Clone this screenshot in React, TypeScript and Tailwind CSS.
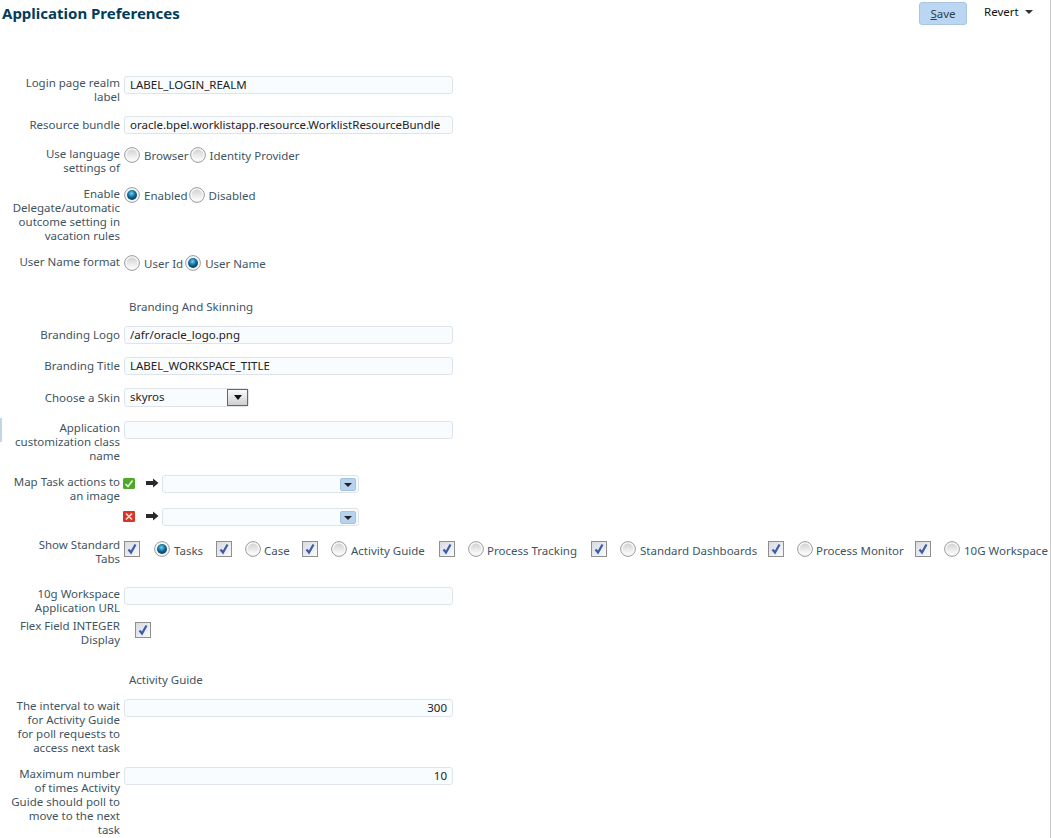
import React from 'react';

const labelCls = 'w-[120px] shrink-0 text-right text-[#41545f] leading-[14px]';
const inputCls = 'w-[329px] h-[18px] rounded-[3px] border border-[#dfe4ea] bg-[#f9fcff] px-[5px] text-[#222] leading-[16px]';

const Radio = ({ on = false }: { on?: boolean }) => (
  <svg width="16" height="16" viewBox="0 0 16 16" className="shrink-0">
    <defs>
      <linearGradient id="rb" x1="0" y1="0" x2="0" y2="1">
        <stop offset="0" stopColor="#d2d2d2" />
        <stop offset="1" stopColor="#fcfcfc" />
      </linearGradient>
      <radialGradient id="rd" cx="0.45" cy="0.35" r="0.7">
        <stop offset="0" stopColor="#7fd0f0" />
        <stop offset="0.5" stopColor="#0f6f9f" />
        <stop offset="1" stopColor="#07304f" />
      </radialGradient>
    </defs>
    <circle cx="8" cy="8" r="7.4" fill="#f7f7f7" stroke="#999da0" strokeWidth="1" />
    {on ? <circle cx="8" cy="8" r="5" fill="url(#rd)" /> : <circle cx="8" cy="8" r="5.4" fill="url(#rb)" />}
  </svg>
);

const Check = () => (
  <svg width="16" height="16" viewBox="0 0 16 16" className="shrink-0">
    <defs>
      <linearGradient id="cb" x1="0" y1="0" x2="1" y2="1">
        <stop offset="0" stopColor="#d6d9e0" />
        <stop offset="1" stopColor="#fbfbfc" />
      </linearGradient>
    </defs>
    <rect x="0.5" y="0.5" width="15" height="15" fill="url(#cb)" stroke="#8f8f8f" />
    <path d="M4.5 8.5 L7 11.5 L11.5 3.5" fill="none" stroke="#3d5ca8" strokeWidth="2.2" />
  </svg>
);

const Arrow = () => (
  <svg width="13" height="10" viewBox="0 0 13 10" className="shrink-0">
    <path d="M0 3H7V0.5L12.5 5L7 9.5V7H0Z" fill="#2a2a2a" />
  </svg>
);

const Row = ({ label, className, children }: { label?: React.ReactNode; className: string; children?: React.ReactNode }) => (
  <div className={`flex gap-1 ${className}`}>
    <div className={labelCls}>{label}</div>
    {children}
  </div>
);

const Opt = ({ on, label, space = 'mr-[2px]' }: { on?: boolean; label: string; space?: string }) => (
  <div className="flex items-start">
    <Radio on={on} />
    <span className={`ml-1 mt-[2px] leading-[14px] text-[#41545f] ${space}`}>{label}</span>
  </div>
);

// widths and gaps differ per tab in the original, so they come in as classes
const Tab = ({ on, label, width, radioGap = 'ml-[13px]', textGap = 'ml-1' }: { on?: boolean; label: string; width: string; radioGap?: string; textGap?: string }) => (
  <div className={`flex items-start shrink-0 ${width}`}>
    <Check />
    <div className={radioGap}><Radio on={on} /></div>
    <span className={`${textGap} mt-[3px] leading-[14px] text-[#41545f] whitespace-nowrap`}>{label}</span>
  </div>
);

const ComboDrop = () => (
  <div className="ml-auto mt-[2px] mr-[2px] w-[16px] h-[13px] rounded-[2px] bg-[#b6d2ee] border border-[#a5c3df] flex items-center justify-center">
    <div className="w-0 h-0 border-x-[4px] border-x-transparent border-t-[4px] border-t-[#222]" />
  </div>
);

export default function App() {
  return (
    <div className="relative w-[1051px] h-[838px] overflow-hidden bg-white text-[11.5px] border-r border-[#c8c8c8]" style={{ fontFamily: '"Noto Sans", sans-serif' }}>
      <div className="absolute left-0 top-[418px] w-[2px] h-[24px] bg-[#c5d5e8]" />
      <header className="h-[26px] flex items-start">
        <h1 className="ml-[2px] mt-[4px] text-[15px] leading-[18px] font-bold text-[#003d5b]">Application Preferences</h1>
        <button className="ml-auto mt-[2px] w-[48px] h-[23px] rounded-[3px] border border-[#a9c5e0] bg-[#bad6f3] text-[#2b3f4f]"><span className="underline">S</span>ave</button>
        <div className="ml-[17px] mr-[17px] w-[49px] mt-[5px] flex items-center justify-between text-[#111] leading-[14px]">
          Revert
          <div className="w-0 h-0 border-x-[4px] border-x-transparent border-t-[4px] border-t-[#333]" />
        </div>
      </header>

      <Row label="Login page realm label" className="mt-[50px]">
        <div className={inputCls}>LABEL_LOGIN_REALM</div>
      </Row>
      <Row label="Resource bundle" className="mt-[12px] items-center">
        <div className={`${inputCls} whitespace-nowrap`}>oracle.bpel.worklistapp.resource.WorklistResourceBundle</div>
      </Row>
      <Row label="Use language settings of" className="mt-[13px]">
        <div className="flex"><Opt label="Browser" space="mr-[1px]" /><Opt label="Identity Provider" /></div>
      </Row>
      <Row label="Enable Delegate/automatic outcome setting in vacation rules" className="mt-[12px]">
        <div className="flex"><Opt on label="Enabled" space="mr-[1px]" /><Opt label="Disabled" /></div>
      </Row>
      <Row label="User Name format" className="mt-[12px]">
        <div className="flex"><Opt label="User Id" /><Opt on label="User Name" /></div>
      </Row>

      <div className="mt-[29px] ml-[129px] leading-[14px] text-[#41545f]">Branding And Skinning</div>

      <Row label="Branding Logo" className="mt-[12px] items-center">
        <div className={inputCls}>/afr/oracle_logo.png</div>
      </Row>
      <Row label="Branding Title" className="mt-[13px] items-center">
        <div className={inputCls}>LABEL_WORKSPACE_TITLE</div>
      </Row>
      <Row label="Choose a Skin" className="mt-[13px] items-center">
        <div className="w-[125px] h-[19px] rounded-[3px] border border-[#dfe4ea] bg-[#f9fcff] flex">
          <span className="px-[5px] leading-[16px] text-[#222]">skyros</span>
          <div className="ml-auto w-[21px] h-[17px] border border-[#666] bg-gradient-to-b from-[#fafafa] to-[#cfcfcf] flex items-center justify-center">
            <div className="w-0 h-0 border-x-[4px] border-x-transparent border-t-[5px] border-t-[#111]" />
          </div>
        </div>
      </Row>
      <Row label="Application customization class name" className="mt-[14px]">
        <div className={inputCls} />
      </Row>
      <Row label="Map Task actions to an image" className="mt-[12px]">
        <div className="flex flex-col gap-[15px] -ml-[1px]">
          <div className="flex items-start">
            <svg width="12" height="11" viewBox="0 0 12 11" className="mt-[3px] shrink-0">
              <rect width="12" height="11" rx="1.5" fill="#4da82c" />
              <path d="M2.5 6L5 8.5L9.5 2.5" fill="none" stroke="#e8f6d8" strokeWidth="1.6" />
            </svg>
            <div className="ml-[11px] mt-[3px]"><Arrow /></div>
            <div className="ml-[3px] w-[197px] h-[18px] rounded-[3px] border border-[#dfe4ea] bg-[#f9fcff] flex"><ComboDrop /></div>
          </div>
          <div className="flex items-start">
            <svg width="12" height="11" viewBox="0 0 12 11" className="mt-[3px] shrink-0">
              <rect width="12" height="11" rx="1" fill="#d8342a" />
              <path d="M3 2.5L9 8.5M9 2.5L3 8.5" stroke="#fbe0dc" strokeWidth="1.6" />
            </svg>
            <div className="ml-[11px] mt-[3px]"><Arrow /></div>
            <div className="ml-[3px] w-[197px] h-[18px] rounded-[3px] border border-[#dfe4ea] bg-[#f9fcff] flex"><ComboDrop /></div>
          </div>
        </div>
      </Row>
      <Row label={<>Show Standard<br />Tabs</>} className="mt-[12px]">
        <div className="flex mt-[3px]">
          <Tab on label="Tasks" width="w-[92px]" radioGap="ml-[14px]" />
          <Tab label="Case" width="w-[86px]" textGap="ml-[3px]" />
          <Tab label="Activity Guide" width="w-[137px]" />
          <Tab label="Process Tracking" width="w-[152px]" textGap="ml-[3px]" />
          <Tab label="Standard Dashboards" width="w-[177px]" />
          <Tab label="Process Monitor" width="w-[147px]" textGap="ml-[3px]" />
          <Tab label="10G Workspace" width="w-[135px]" />
        </div>
      </Row>
      <Row label="10g Workspace Application URL" className="mt-[21px]">
        <div className={inputCls} />
      </Row>
      <Row label="Flex Field INTEGER Display" className="mt-[4px]">
        <div className="ml-[11px] mt-[3px]"><Check /></div>
      </Row>

      <div className="mt-[26px] ml-[129px] leading-[14px] text-[#41545f]">Activity Guide</div>

      <Row label={<>The interval to wait<br />for Activity Guide<br />for poll requests to<br />access next task</>} className="mt-[12px]">
        <div className={`${inputCls} text-right`}>300</div>
      </Row>
      <Row label={<>Maximum number<br />of times Activity<br />Guide should poll to<br />move to the next<br />task</>} className="mt-[12px]">
        <div className={`${inputCls} text-right`}>10</div>
      </Row>
    </div>
  );
}
